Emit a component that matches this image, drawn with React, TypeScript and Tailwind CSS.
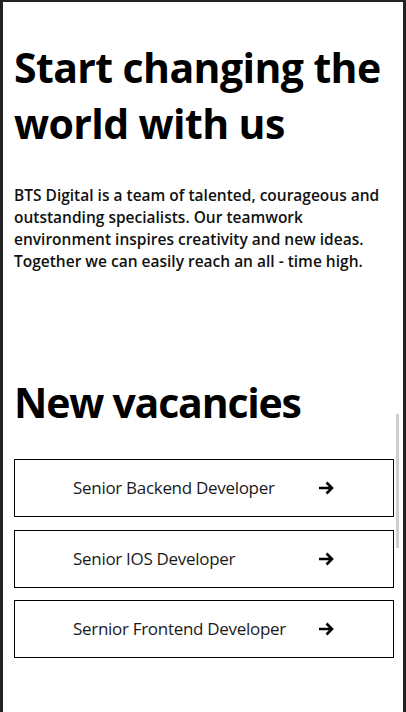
import React from "react";

type Vacancy = { title: string };

const vacancies: Vacancy[] = [
  { title: "Senior Backend Developer" },
  { title: "Senior IOS Developer" },
  { title: "Sernior Frontend Developer" },
];

const Arrow = () => (
  <svg width="16" height="14" viewBox="0 0 16 14" fill="none" className="shrink-0">
    <path
      d="M1 7h13M8.5 1.5 14 7l-5.5 5.5"
      stroke="#000"
      strokeWidth="2.6"
      strokeLinecap="butt"
      strokeLinejoin="miter"
    />
  </svg>
);

const App = () => {
  return (
    <div className="h-[712px] overflow-hidden bg-[#222222] pt-[2px] px-[3px] font-['Open_Sans',sans-serif]">
      <div className="relative h-[710px] bg-white pl-[11px] pr-[9px]">
        <h1 className="pt-[37px] text-[41px] leading-[56px] font-bold text-black tracking-[-0.6px]">
          Start changing the world with us
        </h1>
        <p className="mt-[33px] text-[15.5px] leading-[22px] font-semibold text-[#111]">
          BTS Digital is a team of talented, courageous and outstanding specialists. Our teamwork
          environment inspires creativity and new ideas. Together we can easily reach an all - time high.
        </p>
        <h2 className="mt-[102px] text-[41px] leading-[56px] font-bold text-black tracking-[-1.2px]">
          New vacancies
        </h2>
        <ul className="mt-[29px] flex flex-col gap-[12.5px]">
          {vacancies.map((v) => (
            <li
              key={v.title}
              className="flex h-[58px] items-center justify-between border border-black pl-[58px] pr-[59px]"
            >
              <span className="text-[17px] text-[#1a1a1a] tracking-[-0.3px]">{v.title}</span>
              <Arrow />
            </li>
          ))}
        </ul>
        <div className="absolute right-[4px] top-[412px] h-[134px] w-[3px] bg-[#cfcfcf]" />
      </div>
    </div>
  );
};

export default App;
